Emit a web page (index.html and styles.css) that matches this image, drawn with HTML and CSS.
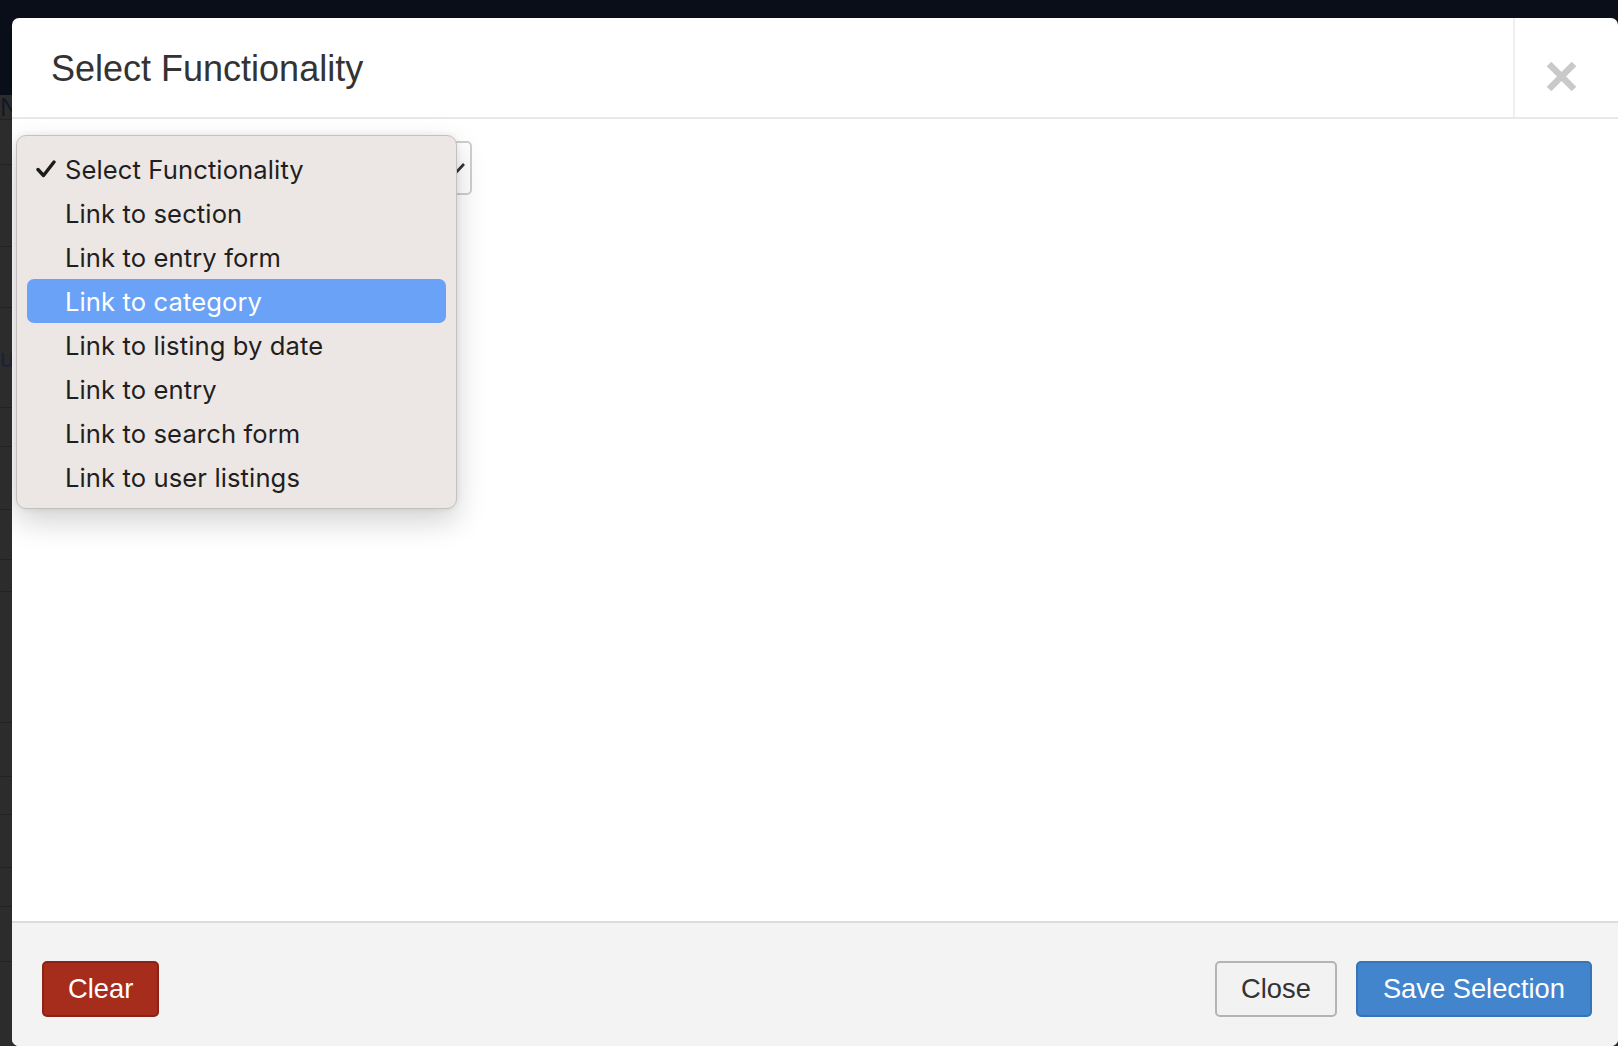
FILE: index.html
```html
<!DOCTYPE html>
<html>
<head>
<meta charset="utf-8">
<link rel="stylesheet" href="styles.css">
</head>
<body>
<div class="page">
  <div class="page-top"></div>
  <div class="page-rows">
    <div class="prow h1">Ne</div>
    <div class="prow h2"></div>
    <div class="prow h3"></div>
    <div class="prow h4"></div>
    <div class="prow h5">u</div>
    <div class="prow h6"></div>
    <div class="prow h7"></div>
    <div class="prow h8"></div>
    <div class="prow h9"></div>
    <div class="prow h10"></div>
    <div class="prow h11"></div>
    <div class="prow h12"></div>
    <div class="prow h13"></div>
    <div class="prow h14"></div>
    <div class="prow h15"></div>
  </div>
</div>

<div class="modal">
  <div class="modal-header">
    <h4 class="modal-title">Select Functionality</h4>
    <button class="close-btn" aria-label="Close">
      <svg width="31" height="31" viewBox="0 0 31 31"><path d="M3 3 L28 28 M28 3 L3 28" stroke="#c9c9c9" stroke-width="6.5" fill="none"/></svg>
    </button>
  </div>
  <div class="modal-body">
    <div class="fake-select">
      <svg class="sel-arrow" width="18" height="14" viewBox="0 0 18 14"><path d="M2 3 L9 10.5 L16 3" stroke="#333" stroke-width="2.6" fill="none"/></svg>
    </div>
    <div class="popup">
      <div class="opt checked">
        <svg class="check" width="20" height="18" viewBox="0 0 20 18"><path d="M2 9.5 L7.5 15.5 L18 2" stroke="#1c1c1c" stroke-width="3.4" fill="none" stroke-linecap="round" stroke-linejoin="round"/></svg>
        Select Functionality
      </div>
      <div class="opt">Link to section</div>
      <div class="opt">Link to entry form</div>
      <div class="opt active">Link to category</div>
      <div class="opt">Link to listing by date</div>
      <div class="opt">Link to entry</div>
      <div class="opt">Link to search form</div>
      <div class="opt">Link to user listings</div>
    </div>
  </div>
  <div class="modal-footer">
    <button class="btn btn-danger">Clear</button>
    <div class="spacer"></div>
    <button class="btn btn-default">Close</button>
    <button class="btn btn-primary">Save Selection</button>
  </div>
</div>
</body>
</html>
```

FILE: styles.css
```css
* { box-sizing: border-box; }
html, body { margin: 0; padding: 0; }
body {
  width: 1618px;
  height: 1046px;
  overflow: hidden;
  background: #2c2c2c;
  font-family: "Liberation Sans", Arial, sans-serif;
  position: relative;
}
.page { width: 100%; height: 100%; }
.page-top { height: 95px; background: #0a0e18; }
.page-rows { display: flex; flex-direction: column; }
.prow {
  border-bottom: 1px solid #222;
  color: #111827;
  font-size: 26px;
  line-height: 1;
  white-space: nowrap;
  display: flex;
  align-items: center;
}
.h1 { height: 25px; }
.h2 { height: 45px; }
.h3 { height: 82px; }
.h4 { height: 61px; }
.h5 { height: 100px; color: #1b2233; }
.h6 { height: 39px; }
.h7 { height: 63px; }
.h8 { height: 50px; }
.h9 { height: 32px; }
.h10 { height: 131px; }
.h11 { height: 54px; }
.h12 { height: 38px; }
.h13 { height: 53px; }
.h14 { height: 39px; }
.h15 { height: 55px; }

.modal {
  position: absolute;
  top: 18px;
  left: 12px;
  right: 0;
  bottom: 0;
  background: #fff;
  border-radius: 7px;
  display: flex;
  flex-direction: column;
  overflow: hidden;
}
.modal-header {
  height: 101px;
  border-bottom: 2px solid #e8e8e8;
  display: flex;
  align-items: stretch;
  flex-shrink: 0;
}
.modal-title {
  margin: 0;
  flex: 1;
  padding-left: 39px;
  padding-top: 29px;
  font-size: 36px;
  font-weight: normal;
  color: #333;
  line-height: 44px;
}
.close-btn {
  width: 105px;
  border: none;
  border-left: 2px solid #efefef;
  background: transparent;
  padding: 18px 11px 0 0;
  display: flex;
  align-items: center;
  justify-content: center;
}
.modal-body {
  flex: 1;
  position: relative;
}
.fake-select {
  margin-top: 22px;
  margin-left: 30px;
  width: 430px;
  height: 54px;
  border: 2px solid #cfcfcf;
  border-radius: 5px;
  background: #fff;
  position: relative;
}
.sel-arrow {
  position: absolute;
  right: 4px;
  top: 18px;
}
.popup {
  position: absolute;
  top: 16px;
  left: 4px;
  width: 441px;
  height: 374px;
  background: #ece7e4;
  border: 1px solid #c4c0bd;
  border-radius: 10px;
  box-shadow: 0 12px 30px rgba(0, 0, 0, 0.18), 0 0 6px rgba(0, 0, 0, 0.08);
  padding: 11px 10px 8px 10px;
  display: flex;
  flex-direction: column;
}
.opt {
  height: 44px;
  flex-shrink: 0;
  position: relative;
  padding-left: 38px;
  display: flex;
  align-items: center;
  font-family: Inter, "Noto Sans", sans-serif;
  font-size: 25.6px;
  color: #1f1f1f;
  border-radius: 7px;
  letter-spacing: 0.1px;
}
.opt .check {
  position: absolute;
  left: 9px;
  top: 13px;
}
.opt.active {
  background: #69a2f7;
  color: #fff;
}

.modal-footer {
  height: 125px;
  flex-shrink: 0;
  background: #f3f3f3;
  border-top: 2px solid #dcdcdc;
  display: flex;
  align-items: flex-start;
  padding: 38px 26px 0 30px;
  gap: 19px;
}
.spacer { flex: 1; }
.btn {
  height: 56px;
  padding: 0 24px;
  font-family: "Liberation Sans", Arial, sans-serif;
  font-size: 27.3px;
  border-radius: 5px;
  border: 2px solid transparent;
  cursor: pointer;
  line-height: 1;
}
.btn-danger {
  background: #a62c1b;
  border-color: #8c2316;
  color: #fff;
}
.btn-default {
  background: #f2f2f2;
  border-color: #b4b4b4;
  color: #333;
}
.btn-primary {
  padding: 0 25px;
  background: #4285cd;
  border-color: #3674b8;
  color: #fff;
}
```
